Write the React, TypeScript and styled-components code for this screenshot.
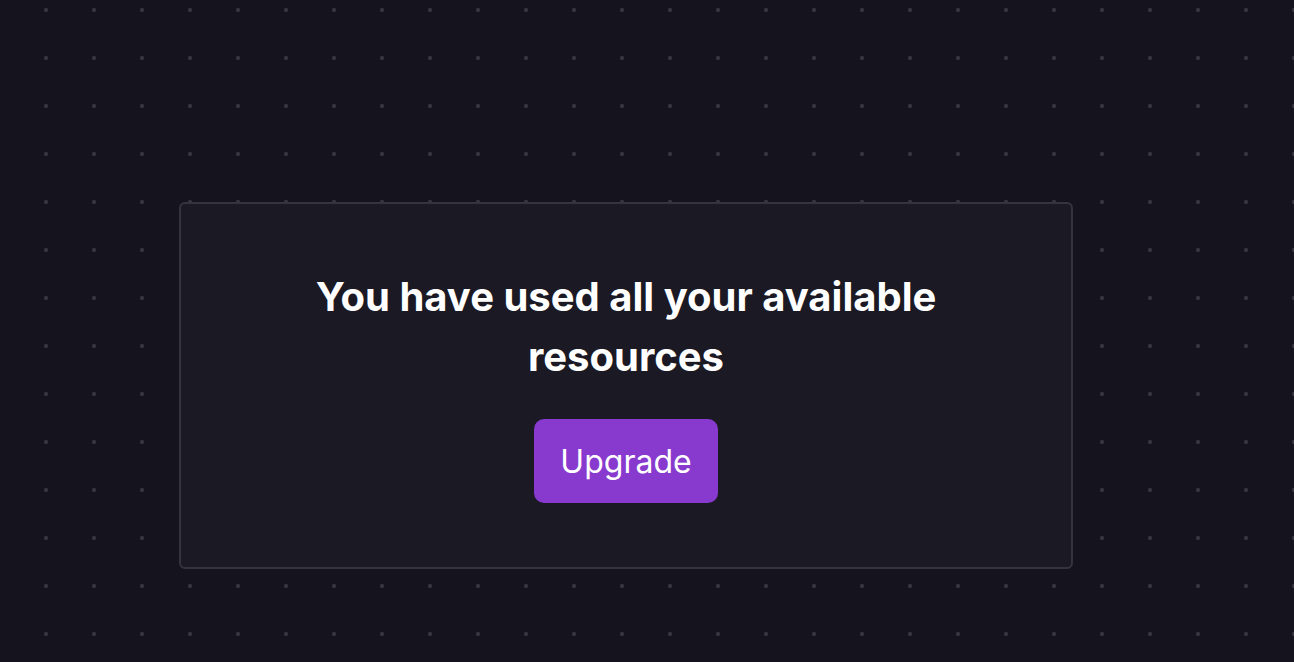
import React from 'react'
import styled, { createGlobalStyle } from 'styled-components'

const GlobalStyle = createGlobalStyle`
  html, body {
    margin: 0;
    padding: 0;
    height: 100%;
  }
  body {
    background-color: #15131d;
    background-image: radial-gradient(circle, #363440 1.9px, transparent 2.3px);
    background-size: 48px 48px;
    background-position: 22px -14px;
    font-family: Inter, "Noto Sans", sans-serif;
    color: #ffffff;
  }
`

const Page = styled.div`
  min-height: 662px;
  box-sizing: border-box;
  padding: 202px 0 0 179px;
`

const Card = styled.div`
  box-sizing: border-box;
  width: 894px;
  height: 367px;
  background: #1b1923;
  border: 2px solid #35333f;
  border-radius: 6px;
  display: flex;
  flex-direction: column;
  align-items: center;
  padding-top: 63px;
`

const Title = styled.h2`
  margin: 0;
  max-width: 660px;
  text-align: center;
  font-size: 40px;
  line-height: 60px;
  font-weight: 700;
  color: #ffffff;
`

const UpgradeButton = styled.button`
  margin-top: 32px;
  width: 184px;
  height: 84px;
  border: none;
  border-radius: 10px;
  background: #8839ce;
  color: #ffffff;
  font-family: Inter, "Noto Sans", sans-serif;
  font-size: 32px;
  font-weight: 400;
  cursor: pointer;
`

export default function App() {
  return (
    <>
      <GlobalStyle />
      <Page>
        <Card>
          <Title>You have used all your available resources</Title>
          <UpgradeButton>Upgrade</UpgradeButton>
        </Card>
      </Page>
    </>
  )
}
